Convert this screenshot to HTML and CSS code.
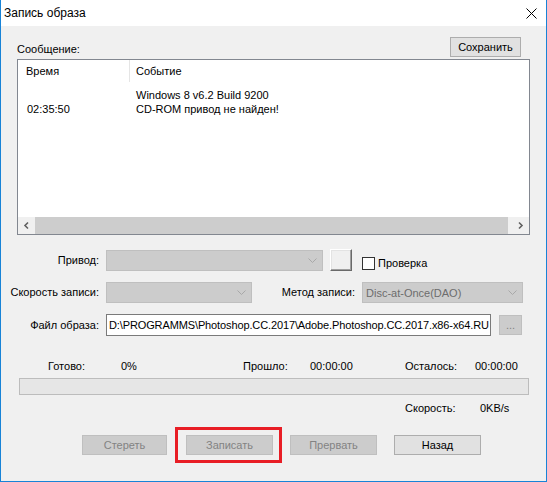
FILE: index.html
```html
<!DOCTYPE html>
<html lang="ru">
<head>
<meta charset="utf-8">
<title>Запись образа</title>
<link rel="stylesheet" href="styles.css">
</head>
<body>
<div class="window">
  <div class="titlebar">
    <span class="title">Запись образа</span>
    <svg class="close" width="11" height="11" viewBox="0 0 11 11"><path d="M0.5 0.5 L10.5 10.5 M10.5 0.5 L0.5 10.5" stroke="#000" stroke-width="1" fill="none"/></svg>
  </div>
  <div class="content">
    <div class="msg-area">
      <div class="msg-head">
        <span class="msg-label">Сообщение:</span>
        <button class="btn save">Сохранить</button>
      </div>
      <div class="listbox">
        <div class="lv-head">
          <div class="col1">Время</div>
          <div class="divider"></div>
          <div class="col2">Событие</div>
        </div>
        <div class="lv-body">
          <div class="lv-row"><div class="col1"></div><div class="col2">Windows 8 v6.2 Build 9200</div></div>
          <div class="lv-row"><div class="col1 time">02:35:50</div><div class="col2">CD-ROM привод не найден!</div></div>
        </div>
        <div class="hscroll">
          <div class="sb-btn"><svg width="17" height="17" viewBox="0 0 17 17"><path d="M10 5.5 L7 8.5 L10 11.5" stroke="#606060" stroke-width="1.6" fill="none"/></svg></div>
          <div class="sb-track"><div class="sb-thumb"></div></div>
          <div class="sb-btn"><svg width="17" height="17" viewBox="0 0 17 17"><path d="M7 5.5 L10 8.5 L7 11.5" stroke="#606060" stroke-width="1.6" fill="none"/></svg></div>
        </div>
      </div>
    </div>

    <div class="form-row row-drive">
      <span class="f-label">Привод:</span>
      <div class="combo combo-drive"><span class="combo-text"></span><svg class="chev" width="9" height="5" viewBox="0 0 9 5"><path d="M0.5 0.5 L4.5 4.5 L8.5 0.5" stroke="#a8a8a8" fill="none"/></svg></div>
      <div class="btn3d"></div>
      <div class="check-group"><span class="checkbox"></span><span class="check-label">Проверка</span></div>
    </div>

    <div class="form-row row-speed">
      <span class="f-label">Скорость записи:</span>
      <div class="combo combo-speed"><span class="combo-text"></span><svg class="chev" width="9" height="5" viewBox="0 0 9 5"><path d="M0.5 0.5 L4.5 4.5 L8.5 0.5" stroke="#a8a8a8" fill="none"/></svg></div>
      <span class="m-label">Метод записи:</span>
      <div class="combo combo-method"><span class="combo-text">Disc-at-Once(DAO)</span><svg class="chev" width="9" height="5" viewBox="0 0 9 5"><path d="M0.5 0.5 L4.5 4.5 L8.5 0.5" stroke="#a8a8a8" fill="none"/></svg></div>
    </div>

    <div class="form-row row-file">
      <span class="f-label file-label">Файл образа:</span>
      <div class="textbox">D:\PROGRAMMS\Photoshop.CC.2017\Adobe.Photoshop.CC.2017.x86-x64.RU</div>
      <div class="btn disabled browse">...</div>
    </div>

    <div class="stats">
      <span>Готово:</span><span>0%</span><span>Прошло:</span><span>00:00:00</span><span>Осталось:</span><span>00:00:00</span>
    </div>

    <div class="progress"></div>

    <div class="speed">
      <span class="speed-label">Скорость:</span><span>0KB/s</span>
    </div>

    <div class="actions">
      <div class="btn disabled b-erase">Стереть</div>
      <div class="btn disabled b-write">Записать</div>
      <div class="btn disabled b-abort">Прервать</div>
      <div class="btn b-back">Назад</div>
    </div>
  </div>
  <div class="highlight"></div>
</div>
</body>
</html>
```

FILE: styles.css
```css
* { box-sizing: border-box; }

html, body {
  margin: 0;
  padding: 0;
  background: #f0f0f0;
}

body {
  font-family: "Liberation Sans", Arial, sans-serif;
  font-size: 11px;
  color: #000;
}

.window {
  position: relative;
  width: 547px;
  height: 482px;
  background: #f0f0f0;
  border: 1px solid #1883d7;
  border-top: none;
  overflow: hidden;
}

.titlebar {
  height: 26px;
  background: #fff;
  display: flex;
  align-items: center;
  padding-left: 3px;
}

.title {
  font-size: 12px;
  line-height: 16px;
}

.close {
  margin-left: auto;
  margin-right: 9px;
  align-self: flex-start;
  margin-top: 8px;
}

.msg-area {
  padding: 0 16px;
}

.msg-head {
  display: flex;
  justify-content: space-between;
  align-items: flex-end;
  margin-top: 11px;
}

.msg-label {
  line-height: 13px;
  padding-bottom: 1px;
}

.btn {
  height: 20px;
  border: 1px solid #adadad;
  background: #e1e1e1;
  font-family: inherit;
  font-size: 11px;
  color: #000;
  display: flex;
  align-items: center;
  justify-content: center;
  padding: 0;
}

.btn.disabled {
  background: #cccccc;
  border-color: #bfbfbf;
  color: #838383;
}

.save {
  width: 71px;
  margin-right: 9px;
}

.listbox {
  margin-top: 2px;
  height: 176px;
  border: 1px solid #828790;
  background: #fff;
  display: flex;
  flex-direction: column;
}

.lv-head {
  height: 22px;
  display: flex;
  line-height: 22px;
}

.col1 {
  width: 111px;
  padding-left: 8px;
  flex: none;
}

.divider {
  width: 1px;
  height: 22px;
  background: #e5e5e5;
}

.col2 {
  padding-left: 6px;
}

.lv-body {
  flex: 1;
  padding-top: 6px;
}

.lv-row {
  display: flex;
  height: 14px;
  line-height: 14px;
}

.lv-row .col2 {
  padding-left: 7px;
}

.lv-row .time {
  padding-left: 9px;
}

.hscroll {
  height: 17px;
  display: flex;
  background: #f0f0f0;
}

.sb-btn {
  width: 17px;
  height: 17px;
  flex: none;
}

.sb-btn svg {
  display: block;
}

.sb-track {
  flex: 1;
  display: flex;
}

.sb-thumb {
  width: 473px;
  height: 17px;
  background: #cdcdcd;
}

.form-row {
  display: flex;
  align-items: center;
}

.f-label {
  width: 97px;
  margin-left: 1px;
  margin-right: 7px;
  text-align: right;
  line-height: 13px;
  flex: none;
}

.row-drive {
  margin-top: 15px;
  align-items: flex-start;
}

.row-drive .f-label {
  margin-top: 4px;
}

.combo {
  height: 21px;
  background: #cccccc;
  border: 1px solid #bfbfbf;
  display: flex;
  align-items: center;
  padding-left: 3px;
  padding-right: 5px;
  flex: none;
}

.combo-text {
  flex: 1;
  color: #6d6d6d;
  white-space: nowrap;
}

.chev {
  display: block;
}

.combo-drive { width: 217px; }
.combo-speed { width: 146px; }
.combo-method { width: 161px; }

.btn3d {
  width: 22px;
  height: 22px;
  margin-left: 7px;
  margin-top: -1px;
  background: #f0f0f0;
  border: 1px solid;
  border-color: #ffffff #696969 #696969 #ffffff;
  box-shadow: inset -1px -1px 0 #a0a0a0, inset 1px 1px 0 #e3e3e3;
}

.check-group {
  display: flex;
  align-items: center;
  margin-left: 10px;
  margin-top: 7px;
}

.checkbox {
  width: 13px;
  height: 13px;
  border: 1px solid #333;
  background: #fff;
}

.check-label {
  margin-left: 3px;
  line-height: 13px;
}

.row-speed {
  margin-top: 11px;
}

.m-label {
  width: 103px;
  margin-right: 7px;
  text-align: right;
  line-height: 13px;
}

.row-file {
  margin-top: 11px;
}

.textbox {
  width: 385px;
  height: 22px;
  border: 1px solid #7a7a7a;
  background: #fff;
  padding-left: 2px;
  line-height: 20px;
  letter-spacing: -0.12px;
  white-space: nowrap;
  overflow: hidden;
}

.browse {
  width: 23px;
  margin-left: 8px;
}

.stats {
  margin-top: 24px;
  padding-left: 47px;
  display: grid;
  grid-template-columns: 73px 122px 67px 95px 70px auto;
  line-height: 13px;
}

.progress {
  margin-top: 5px;
  margin-left: 18px;
  width: 510px;
  height: 17px;
  border: 1px solid #bcbcbc;
  background: #e6e6e6;
}

.speed {
  margin-top: 7px;
  padding-left: 404px;
  display: flex;
  line-height: 13px;
}

.speed-label {
  width: 75px;
}

.actions {
  margin-top: 20px;
  display: flex;
}

.b-erase { width: 85px; margin-left: 81px; }
.b-write { width: 87px; margin-left: 19px; }
.b-abort { width: 87px; margin-left: 17px; }
.b-back  { width: 87px; margin-left: 17px; }

.highlight {
  position: absolute;
  left: 174px;
  top: 427px;
  width: 107px;
  height: 36px;
  border: 3px solid #e81d25;
}
```
